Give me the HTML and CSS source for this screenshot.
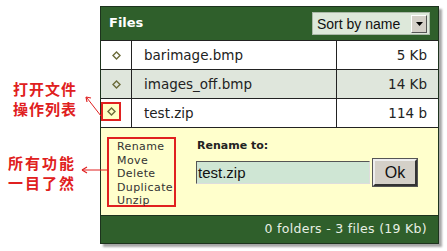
FILE: index.html
```html
<!DOCTYPE html>
<html lang="zh">

<head>
    <meta charset="UTF-8">
    <title>Files</title>
    <link rel="stylesheet" href="styles.css">
</head>

<body>

    <div class="stage">
        <div class="panel">
            <div class="head">
                <span class="title">Files</span>
                <div class="sort">
                    <span>Sort by name</span>
                    <span class="drop"><svg width="7" height="4" viewBox="0 0 7 4"><path d="M0 0h7L3.5 4z" fill="#000"/></svg></span>
                </div>
            </div>

            <table class="files">
                <tr>
                    <td class="ico"><svg class="dia" width="9" height="9" viewBox="0 0 9 9"><path d="M4.5 1L8 4.5 4.5 8 1 4.5z" fill="none" stroke="#6b6b3a" stroke-width="1.4"/></svg></td>
                    <td class="name">barimage.bmp</td>
                    <td class="size">5 Kb</td>
                </tr>
                <tr class="alt">
                    <td class="ico"><svg class="dia" width="9" height="9" viewBox="0 0 9 9"><path d="M4.5 1L8 4.5 4.5 8 1 4.5z" fill="none" stroke="#6b6b3a" stroke-width="1.4"/></svg></td>
                    <td class="name">images_off.bmp</td>
                    <td class="size">14 Kb</td>
                </tr>
                <tr>
                    <td class="ico"><span class="mark"><svg class="dia" width="9" height="9" viewBox="0 0 9 9"><path d="M4.5 1L8 4.5 4.5 8 1 4.5z" fill="none" stroke="#6b6b3a" stroke-width="1.4"/></svg></span></td>
                    <td class="name">test.zip</td>
                    <td class="size">114 b</td>
                </tr>
            </table>

            <div class="actions">
                <ul class="menu">
                    <li>Rename</li>
                    <li>Move</li>
                    <li>Delete</li>
                    <li>Duplicate</li>
                    <li>Unzip</li>
                </ul>
                <div class="rename">
                    <div class="label">Rename to:</div>
                    <div class="field">
                        <div class="input">test.zip</div>
                        <div class="ok">Ok</div>
                    </div>
                </div>
            </div>

            <div class="foot">0 folders - 3 files (19 Kb)</div>
        </div>

        <!-- callouts -->
        <div class="note note1">打开文件<br>操作列表</div>
        <svg class="arrow" width="447" height="251" viewBox="0 0 447 251">
            <path d="M87 98L101 116" stroke="#e02020" stroke-width="1"/>
            <path d="M86 97l5 1M86 97l1 5" stroke="#e02020" stroke-width="1.2"/>
            <path d="M82 170H107" stroke="#e02020" stroke-width="1"/>
            <path d="M82 170l5 -3M82 170l5 3" stroke="#e02020" stroke-width="1.2"/>
        </svg>
        <div class="note note2">所有功能<br>一目了然</div>
    </div>

</body>

</html>
```

FILE: styles.css
```css
body {
    margin: 0;
    background: #fff;
    font-family: 'DejaVu Sans', Verdana, sans-serif;
}

.stage {
    position: relative;
    width: 447px;
    height: 251px;
    padding: 6px 0 0 100px;
    box-sizing: border-box;
}

.panel {
    width: 339px;
    border: 1px solid #1d331d;
    box-sizing: border-box;
    box-shadow: 3px 3px 2px rgba(0, 0, 0, 0.35);
}

/* header */
.head {
    height: 33px;
    background: #2f5f2b;
    display: flex;
    align-items: center;
    justify-content: space-between;
    padding: 0 8px 0 8px;
}

.title {
    color: #fff;
    font-weight: bold;
    font-size: 13px;
    margin-top: -3px;
}

.sort {
    display: flex;
    align-items: center;
    justify-content: space-between;
    width: 118px;
    height: 23px;
    box-sizing: border-box;
    background: #dde8da;
    border: 1px solid #aab8a8;
    padding: 0 2px 0 4px;
    font-family: 'Liberation Sans', Arial, sans-serif;
    font-size: 14px;
    color: #111;
}

.drop {
    width: 14px;
    height: 16px;
    background: #d4d0c8;
    border: 1px solid;
    border-color: #fff #555 #555 #fff;
    display: flex;
    align-items: center;
    justify-content: center;
}

/* file rows */
.files {
    width: 100%;
    border-collapse: collapse;
    font-size: 13.5px;
    color: #222;
}

.files td {
    height: 28px;
    border-top: 1px solid #222;
    padding: 0;
}

.files .alt td {
    background: #dfe6dc;
}

.ico {
    width: 30px;
    border-right: 1px solid #222;
    text-align: center;
    position: relative;
}

.dia {
    display: block;
    margin: 0 auto;
}

.mark {
    position: absolute;
    left: 0;
    top: 3px;
    width: 20px;
    height: 19px;
    box-sizing: border-box;
    border: 2px solid #e02020;
    background: #ffffc4;
    display: flex;
    align-items: center;
    justify-content: center;
}

.name {
    padding-left: 12px !important;
}

.size {
    width: 90px;
    border-left: 1px solid #222;
    text-align: right;
    padding-right: 11px !important;
}

/* action area */
.actions {
    height: 88px;
    background: #ffffcc;
    border-top: 1px solid #222;
    display: flex;
    padding: 9px 0 0 6px;
    box-sizing: border-box;
}

.menu {
    list-style: none;
    margin: 0;
    padding: 1px 0 0 8px;
    width: 69px;
    height: 70px;
    box-sizing: border-box;
    border: 2px solid #e02020;
    font-size: 11px;
    line-height: 13.5px;
    color: #333;
    letter-spacing: 0.4px;
}

.rename {
    margin-left: 21px;
}

.label {
    font-weight: bold;
    font-size: 11px;
    color: #222;
    margin-top: 2px;
}

.field {
    display: flex;
    align-items: center;
    margin-top: 7px;
    margin-left: -1px;
}

.input {
    width: 174px;
    height: 23px;
    box-sizing: border-box;
    background: #cfe6d4;
    border: 1px solid;
    border-color: #555 #ddd #ddd #555;
    font-family: 'Liberation Sans', Arial, sans-serif;
    font-size: 15px;
    line-height: 21px;
    padding-left: 1px;
    color: #111;
}

.ok {
    width: 44px;
    height: 27px;
    box-sizing: border-box;
    margin-left: 3px;
    background: #d4d0c8;
    border: 2px solid;
    border-color: #eee #333 #333 #eee;
    outline: 1px solid #555;
    font-family: 'Liberation Sans', Arial, sans-serif;
    font-size: 16px;
    text-align: center;
    line-height: 23px;
    color: #111;
}

.foot {
    height: 28px;
    background: #2f5f2b;
    border-top: 1px solid #1d331d;
    box-sizing: border-box;
    color: #e8f0e4;
    font-size: 12.5px;
    text-align: right;
    padding: 5px 11px 0 0;
    letter-spacing: 0.3px;
}

/* annotation callouts */
.note {
    position: absolute;
    color: #e02020;
    font-family: 'Noto Sans CJK SC', sans-serif;
    font-weight: bold;
    font-size: 15px;
    line-height: 20px;
    letter-spacing: 1px;
}

.note1 {
    left: 13px;
    top: 79px;
}

.note2 {
    left: 8px;
    top: 153px;
    letter-spacing: 2px;
}

.arrow {
    position: absolute;
    left: 0;
    top: 0;
    pointer-events: none;
}
```
